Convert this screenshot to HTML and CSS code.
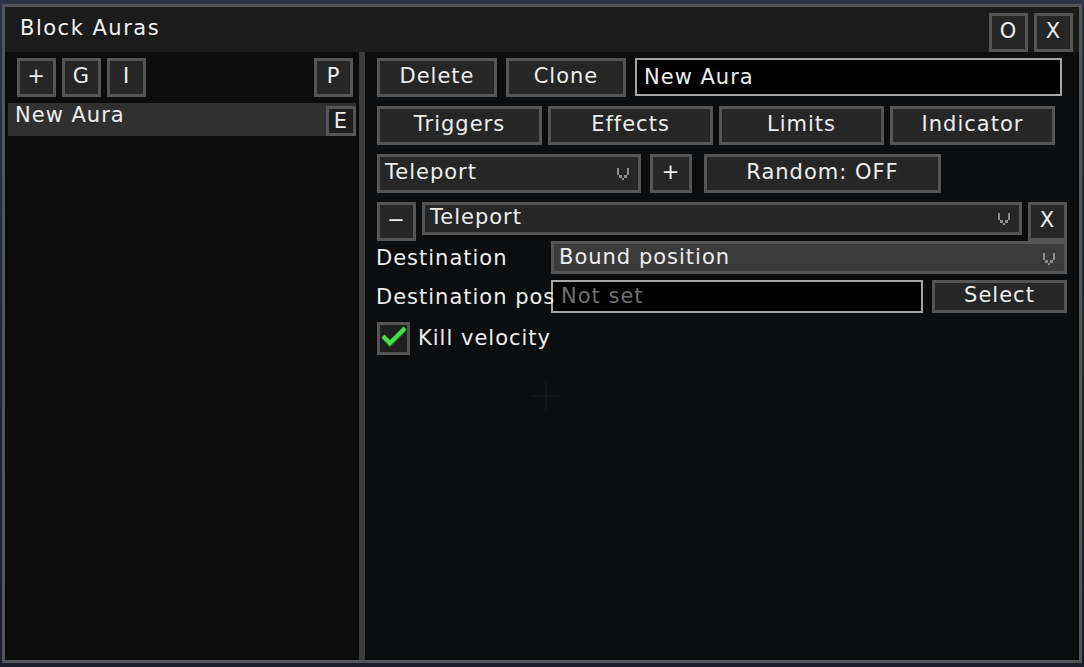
FILE: index.html
```html
<!DOCTYPE html>
<html>
<head>
<meta charset="utf-8">
<link rel="stylesheet" href="styles.css">
</head>
<body>
<div class="window">
  <div class="titlebar">
    <div class="title">Block Auras</div>
    <div class="title-btns">
      <div class="btn sq">O</div>
      <div class="btn sq">X</div>
    </div>
  </div>
  <div class="main">
    <div class="left">
      <div class="tools">
        <div class="btn sq">+</div>
        <div class="btn sq">G</div>
        <div class="btn sq">I</div>
        <div class="spacer"></div>
        <div class="btn sq">P</div>
      </div>
      <div class="list-item">
        <span class="item-name">New Aura</span>
        <div class="btn edit">E</div>
      </div>
    </div>
    <div class="divider"></div>
    <div class="right">
      <div class="row r1">
        <div class="btn w120">Delete</div>
        <div class="btn w120">Clone</div>
        <div class="field name-field">New Aura</div>
      </div>
      <div class="row r2">
        <div class="btn tab">Triggers</div>
        <div class="btn tab">Effects</div>
        <div class="btn tab">Limits</div>
        <div class="btn tab">Indicator</div>
      </div>
      <div class="row r3">
        <div class="dropdown dd-type"><span>Teleport</span><svg class="arrow" width="12" height="12" viewBox="0 0 5 5"><path d="M0 0H1V3H0ZM4 0H5V3H4ZM1 3H2V4H1ZM3 3H4V4H3ZM2 4H3V5H2Z"/></svg></div>
        <div class="btn add">+</div>
        <div class="btn random">Random: OFF</div>
      </div>
      <div class="row r4">
        <div class="btn sq">&minus;</div>
        <div class="dropdown dd-effect"><span>Teleport</span><svg class="arrow" width="12" height="12" viewBox="0 0 5 5"><path d="M0 0H1V3H0ZM4 0H5V3H4ZM1 3H2V4H1ZM3 3H4V4H3ZM2 4H3V5H2Z"/></svg></div>
        <div class="btn sq">X</div>
      </div>
      <div class="row r5">
        <div class="label">Destination</div>
        <div class="dropdown dd-dest"><span>Bound position</span><svg class="arrow" width="12" height="12" viewBox="0 0 5 5"><path d="M0 0H1V3H0ZM4 0H5V3H4ZM1 3H2V4H1ZM3 3H4V4H3ZM2 4H3V5H2Z"/></svg></div>
      </div>
      <div class="row r6">
        <div class="label over">Destination pos</div>
        <div class="field pos-field">Not set</div>
        <div class="btn select">Select</div>
      </div>
      <div class="row r7">
        <div class="checkbox">
          <svg width="27" height="27" viewBox="0 0 27 27"><path class="shade" d="M3 13L10 20L25 5"/><path class="tick" d="M3 11L10 18L25 3"/></svg>
        </div>
        <div class="check-label">Kill velocity</div>
      </div>
    </div>
  </div>
  <div class="crosshair"></div>
</div>
</body>
</html>
```

FILE: styles.css
```css
html, body {
  margin: 0;
  padding: 0;
}
body {
  width: 1084px;
  height: 667px;
  overflow: hidden;
  background: linear-gradient(180deg, #2c3345 0%, #222838 50%, #1b1f2b 100%);
  font-family: "DejaVu Sans", "Liberation Sans", sans-serif;
  font-size: 21px;
  line-height: 24px;
  letter-spacing: 1px;
  color: #ededed;
}
.window {
  position: relative;
  box-sizing: border-box;
  margin: 4px 0 0 2px;
  width: 1080px;
  height: 659px;
  border: 3px solid #545557;
  background: #0c0c0c;
  display: flex;
  flex-direction: column;
}
.titlebar {
  height: 45px;
  flex: none;
  background: #1b1b1b;
  display: flex;
  justify-content: space-between;
  align-items: flex-end;
  padding: 0 6px 0 15px;
}
.title {
  align-self: flex-start;
  padding-top: 9px;
  color: #f2f2f2;
  letter-spacing: 1.5px;
}
.title-btns {
  display: flex;
  gap: 6px;
}
.btn {
  box-sizing: border-box;
  border: 3px solid #555555;
  background: #262626;
  color: #ededed;
  display: flex;
  align-items: center;
  justify-content: center;
  padding-bottom: 3px;
  white-space: nowrap;
  flex: none;
}
.sq {
  width: 39px;
  height: 39px;
}
.main {
  flex: 1;
  display: flex;
  min-height: 0;
}
.left {
  width: 354px;
  flex: none;
  background: #0c0c0c;
}
.tools {
  display: flex;
  gap: 6px;
  padding: 6px 6px 0 12px;
}
.spacer {
  flex: 1;
}
.list-item {
  margin: 6px 3px 0 3px;
  height: 33px;
  background: #303030;
  display: flex;
  justify-content: space-between;
  align-items: flex-start;
  padding-left: 7px;
}
.item-name {
  line-height: 24px;
}
.edit {
  width: 30px;
  height: 30px;
  margin-top: 3px;
  background: #1e1e1e;
  padding-bottom: 0;
}
.divider {
  width: 6px;
  flex: none;
  background: #3b3b3b;
}
.right {
  flex: 1;
  background: #0c0d0e;
  padding: 6px 12px 0 12px;
}
.row {
  display: flex;
}
.r1 {
  height: 39px;
  gap: 9px;
}
.w120 {
  width: 120px;
}
.field {
  box-sizing: border-box;
  border: 2px solid #a4a4a4;
  background: #000000;
  display: flex;
  align-items: center;
  padding-left: 7px;
}
.name-field {
  flex: 1;
  height: 38px;
  margin-right: 5px;
}
.r2 {
  margin-top: 9px;
  gap: 6px;
  height: 39px;
}
.tab {
  width: 165px;
}
.r3 {
  margin-top: 9px;
  height: 39px;
}
.dropdown {
  box-sizing: border-box;
  border: 3px solid #555555;
  background: #262626;
  display: flex;
  align-items: center;
  justify-content: space-between;
  padding: 0 9px 3px 5px;
  flex: none;
}
.arrow {
  flex: none;
  margin-top: 3px;
  shape-rendering: crispEdges;
}
.arrow path {
  fill: #8c8c8c;
}
.dd-type {
  width: 264px;
  height: 39px;
}
.add {
  width: 42px;
  height: 39px;
  margin-left: 9px;
}
.random {
  width: 237px;
  height: 39px;
  margin-left: 12px;
}
.r4 {
  margin-top: 9px;
  gap: 6px;
  align-items: flex-start;
}
.dd-effect {
  width: 600px;
  height: 33px;
}
.r5 {
  height: 33px;
  align-items: center;
}
.label {
  width: 174px;
  flex: none;
  margin-left: -1px;
  padding-right: 1px;
  white-space: nowrap;
  color: #ededed;
}
.over {
  position: relative;
  z-index: 1;
  overflow: visible;
}
.dd-dest {
  width: 516px;
  height: 33px;
  background: #3b3b3b;
  padding-bottom: 1px;
}
.r6 {
  margin-top: 6px;
  height: 33px;
  align-items: center;
}
.pos-field {
  width: 372px;
  height: 33px;
  color: #707070;
  padding-left: 8px;
  padding-bottom: 2px;
}
.select {
  width: 135px;
  height: 33px;
  margin-left: 9px;
}
.r7 {
  margin-top: 9px;
  align-items: center;
  gap: 8px;
}
.checkbox {
  box-sizing: border-box;
  width: 33px;
  height: 33px;
  border: 3px solid #555555;
  background: #1f1f1f;
  flex: none;
}
.checkbox svg {
  display: block;
}
.checkbox .tick {
  fill: none;
  stroke: #45e048;
  stroke-width: 4;
}
.checkbox .shade {
  fill: none;
  stroke: #2c8a2e;
  stroke-width: 3;
}
.check-label {
  padding-bottom: 2px;
}
.crosshair {
  position: absolute;
  left: 527px;
  top: 375px;
  width: 28px;
  height: 28px;
  background:
    linear-gradient(rgba(255,255,255,0.035), rgba(255,255,255,0.035)) center / 2px 28px no-repeat,
    linear-gradient(rgba(255,255,255,0.035), rgba(255,255,255,0.035)) center / 28px 2px no-repeat;
}
```
